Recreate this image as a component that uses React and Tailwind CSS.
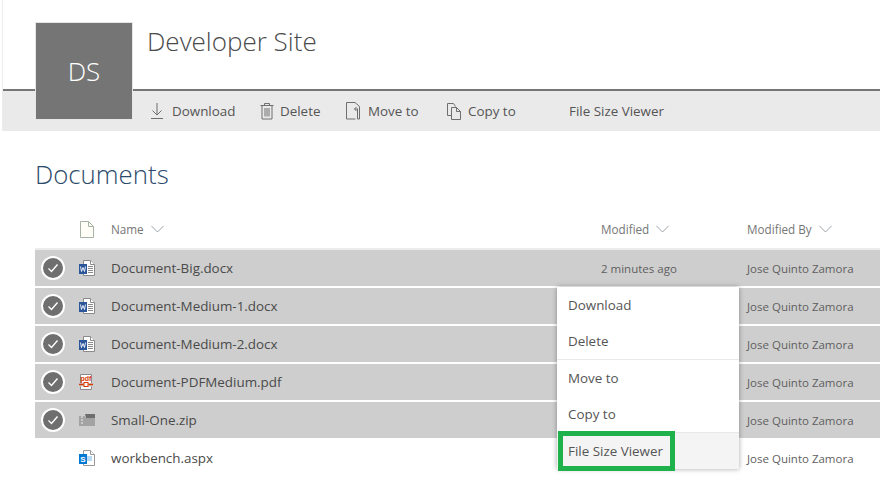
const font = { fontFamily: '"Open Sans", "Noto Sans", sans-serif' }

function DownloadIcon() {
  return (
    <svg width="16" height="18" viewBox="0 0 16 18" fill="none" stroke="#6f6f6f" strokeWidth="1">
      <path d="M8 1v12M3.500 8.500L8 13l4.500-4.500M2 16.500h12" />
    </svg>
  )
}

function TrashIcon() {
  return (
    <svg width="14" height="18" viewBox="0 0 14 18" fill="none" stroke="#6f6f6f" strokeWidth="1">
      <path d="M.5 3.500h13M4.500 3.500v-2h5v2M2 3.500v13.500h10V3.500M5 6v8.500M7 6v8.500M9 6v8.500" />
    </svg>
  )
}

function MoveIcon() {
  return (
    <svg width="15" height="18" viewBox="0 0 15 18" fill="none" stroke="#6f6f6f" strokeWidth="1">
      <path d="M9 .500H.5v16.500h9M9 .500l4.500 4v12.500h-2M12 7H8.500M10.500 5L8.500 7l2 2M11.500 7v10" />
    </svg>
  )
}

function CopyIcon() {
  return (
    <svg width="16" height="18" viewBox="0 0 16 18" fill="none" stroke="#6f6f6f" strokeWidth="1">
      <path d="M5 13.500H1.500V1.500h6l2 3M5.500 5.500h5l4 4v8h-9zM10.500 5.500v4h4" />
    </svg>
  )
}

function Chevron() {
  return (
    <svg width="13" height="8" viewBox="0 0 13 8" fill="none" stroke="#9aa3aa" strokeWidth="1">
      <path d="M.5 1l6 6 6-6" />
    </svg>
  )
}

function BlankDoc() {
  return (
    <svg width="14" height="17" viewBox="0 0 14 17" fill="#fffff8" stroke="#a6b3a6" strokeWidth="1">
      <path d="M.5.500h8l5 5v11H.5z" />
      <path d="M8.500.500v5h5" fill="none" />
    </svg>
  )
}

function WordIcon() {
  return (
    <svg width="16" height="16" viewBox="0 0 16 16">
      <path d="M4.500.500h7l4 4v11h-11z" fill="#fff" stroke="#8a8a8a" />
      <path d="M11.500.500v4h4" fill="#fff" stroke="#8a8a8a" />
      <path d="M9 6.500h5M9 8.500h5M9 10.500h5M9 12.500h5" stroke="#8a8a8a" />
      <rect x="0" y="4" width="8" height="10" fill="#2b579a" />
      <path d="M1.500 6.500l1 5 1.500-4 1.500 4 1-5" fill="none" stroke="#fff" strokeWidth="0.900" />
    </svg>
  )
}

function PdfIcon() {
  return (
    <svg width="14" height="16" viewBox="0 0 14 16">
      <path d="M1.500 9V.5h11V9M1.500 12.500v3h11v-3" fill="#fff" stroke="#8a8a8a" />
      <rect x="2" y="1" width="10" height="8" fill="#fff" />
      <text x="7" y="7" textAnchor="middle" fontSize="7" fontWeight="700" fill="#d83b01" fontFamily="Liberation Sans, sans-serif">pdf</text>
      <path d="M0 10.500h4.500M9.500 10.500H14" stroke="#d83b01" strokeWidth="1.500" />
      <rect x="5" y="8.500" width="4" height="4" fill="#fff" stroke="#d83b01" />
    </svg>
  )
}

function ZipIcon() {
  return (
    <svg width="16" height="12" viewBox="0 0 16 12">
      <path d="M0 2h5.500l1 2H16v8H0z" fill="#a3a3a3" />
      <path d="M6 0h10v4H7z" fill="#6e6e6e" />
      <path d="M2 3h2M2 6h2M2 9h2" stroke="#efefef" strokeWidth="1.200" />
    </svg>
  )
}

function AspxIcon() {
  return (
    <svg width="16" height="16" viewBox="0 0 16 16">
      <path d="M4.500.500h7l4 4v11h-11z" fill="#fff" stroke="#9a9a9a" />
      <path d="M11.500.500v4h4" fill="#fff" stroke="#9a9a9a" />
      <rect x="8" y="6" width="5" height="5" fill="#b8dcf5" />
      <rect x="0" y="4" width="8" height="10" fill="#0078d4" />
      <text x="4" y="12" textAnchor="middle" fontSize="8" fontWeight="700" fill="#fff" fontFamily="Liberation Sans, sans-serif">S</text>
    </svg>
  )
}

function CheckCircle() {
  return (
    <div className="w-6 h-6 rounded-full bg-[#6f6f6f] border-2 border-white flex items-center justify-center">
      <svg width="12" height="10" viewBox="0 0 12 10" fill="none" stroke="#fff" strokeWidth="1.400">
        <path d="M1.500 5.500l3 3 6-7" />
      </svg>
    </div>
  )
}

const commands = [
  { label: "Download", icon: <DownloadIcon />, gap: "gap-[7px]", width: "w-[111px]" },
  { label: "Delete", icon: <TrashIcon />, gap: "gap-[6px]", width: "w-[86px]" },
  { label: "Move to", icon: <MoveIcon />, gap: "gap-[7px]", width: "w-[100px]" },
  { label: "Copy to", icon: <CopyIcon />, gap: "gap-[6px]", width: "w-[123px]" },
  { label: "File Size Viewer", icon: null, gap: "", width: "" },
]

const rows = [
  { name: "Document-Big.docx", icon: <WordIcon />, selected: true, modified: "2 minutes ago" },
  { name: "Document-Medium-1.docx", icon: <WordIcon />, selected: true },
  { name: "Document-Medium-2.docx", icon: <WordIcon />, selected: true },
  { name: "Document-PDFMedium.pdf", icon: <PdfIcon />, selected: true },
  { name: "Small-One.zip", icon: <ZipIcon />, selected: true },
  { name: "workbench.aspx", icon: <AspxIcon />, selected: false },
]

function Row({ row }) {
  return (
    <div className={`flex items-center h-9 ${row.selected ? "bg-[#cecece]" : "bg-white"}`}>
      <div className="w-[36px] flex justify-center">{row.selected && <CheckCircle />}</div>
      <div className="w-[40px] pl-[8px] flex items-center">{row.icon}</div>
      <div className="w-[490px] text-[13.400px] text-[#4a4a4a]">{row.name}</div>
      <div className="w-[146px] pt-[2px] text-[11.500px] text-[#5f5f5f]">{row.modified}</div>
      <div className="pt-[2px] text-[11.500px] text-[#5f5f5f]">Jose Quinto Zamora</div>
    </div>
  )
}

function ContextMenu() {
  return (
    <div className="absolute left-[557px] top-[287px] w-[182px] bg-white shadow-[0_0_5px_rgba(0,0,0,0.35)] text-[13.400px] text-[#555]">
      <div className="h-9 flex items-center pl-[11px]">Download</div>
      <div className="h-9 flex items-center pl-[11px]">Delete</div>
      <div className="border-t border-[#e8e8e8] h-[37px] flex items-center pl-[11px]">Move to</div>
      <div className="h-9 flex items-center pl-[11px]">Copy to</div>
      <div className="relative border-t border-[#e8e8e8] bg-[#f4f4f4] h-[37px] flex items-center pl-[11px]">
        File Size Viewer
        <div className="absolute left-[1px] top-[-2px] w-[117px] h-[40px] border-[5px] border-[#1fb14c]" />
      </div>
    </div>
  )
}

export default function App() {
  return (
    <div className="relative w-[880px] h-[479px] overflow-hidden bg-white" style={font}>
      <div className="ml-[2px] border-l border-[#ececec]">
        <div className="h-[89px] pl-[144px] pt-[23px] text-[26px] font-light leading-[36px] text-[#4a4a4a]">
          Developer Site
        </div>
        <div className="h-[42px] bg-[#eaeaea] border-t-2 border-[#767676] flex items-center pl-[146px] text-[13.400px] text-[#555]">
          {commands.map((c) => (
            <div key={c.label} className={`flex items-center ${c.gap} ${c.width}`}>
              {c.icon}
              <span>{c.label}</span>
            </div>
          ))}
        </div>
      </div>

      <div className="absolute left-[35px] top-[22px] w-[98px] h-[98px] bg-[#757575] border border-[#e6e6e6] flex items-center justify-center text-white font-light text-[26px]">
        DS
      </div>

      <div className="pl-[35px] pt-[23px]">
        <h1 className="h-[40px] text-[25.800px] font-light leading-[40px] text-[#2b4a6b]">Documents</h1>
        <div className="flex items-center h-[56px] pt-[17px] border-b-2 border-[#ececec] text-[11.700px] text-[#767676]">
          <div className="w-[45px]" />
          <div className="w-[31px] flex items-center"><BlankDoc /></div>
          <div className="w-[490px] flex items-center gap-[7px]">Name <Chevron /></div>
          <div className="w-[146px] flex items-center gap-[7px]">Modified <Chevron /></div>
          <div className="flex items-center gap-[7px]">Modified By <Chevron /></div>
        </div>
        <div className="flex flex-col gap-[2px]">
          {rows.map((row) => (
            <Row key={row.name} row={row} />
          ))}
        </div>
      </div>

      <ContextMenu />
    </div>
  )
}
